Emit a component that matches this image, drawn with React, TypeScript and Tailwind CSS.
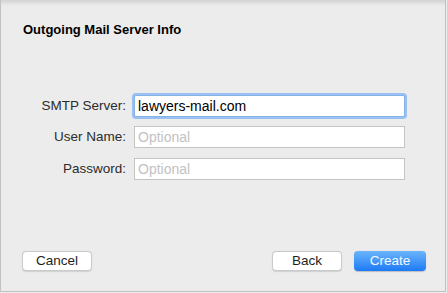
import React from 'react';

const font = { fontFamily: '"Liberation Sans", Arial, sans-serif' };

const Field: React.FC<{ label: string; value?: string; focused?: boolean; className?: string }> = ({
  label,
  value,
  focused,
  className,
}) => (
  <div className={`flex items-center ${className ?? ''}`}>
    <div className="w-[125px] text-right text-[13.5px] leading-[16px] text-[#2b2b2b]">{label}</div>
    <div
      className={`ml-[8px] flex h-[22px] w-[271px] items-center bg-white pl-[3px] text-[14px] leading-[16px] ${
        focused
          ? 'rounded-[2px] border border-[#86b2e8] shadow-[0_0_0_2px_#98c1f1]'
          : 'border border-[#c4c4c4]'
      }`}
    >
      {value ? <span className="text-black">{value}</span> : <span className="text-[#c2c2c2]">Optional</span>}
    </div>
  </div>
);

const Button: React.FC<{ label: string; primary?: boolean; className?: string }> = ({ label, primary, className }) => (
  <div
    className={`flex h-[20px] items-center justify-center rounded-[4px] text-[13.5px] leading-[16px] ${
      primary
        ? 'bg-gradient-to-b from-[#6ab4fb] to-[#1a7af5] text-[#f2f8ff] shadow-[0_0.5px_1px_rgba(0,0,0,0.2)]'
        : 'border border-[#cacaca] bg-white text-[#1e1e1e] shadow-[0_0.5px_1px_rgba(0,0,0,0.12)]'
    } ${className ?? ''}`}
  >
    {label}
  </div>
);

export default function App() {
  return (
    <div className="h-[293px] w-[447px] bg-[#ececec]" style={font}>
      <div className="flex h-[292px] w-[446px] flex-col border-x border-b border-[#c2c2c2] shadow-[inset_0_6px_5px_-4px_rgba(0,0,0,0.14)]">
        <div className="pl-[22px] pt-[22px] text-[13px] font-bold leading-[16px] text-black">
          Outgoing Mail Server Info
        </div>

        <Field label="SMTP Server:" value="lawyers-mail.com" focused className="mt-[57px]" />
        <Field label="User Name:" className="mt-[9px]" />
        <Field label="Password:" className="mt-[10px]" />

        <div className="mt-auto flex items-center pb-[20px] pl-[21px] pr-[19px]">
          <Button label="Cancel" className="w-[70px]" />
          <div className="flex-1" />
          <Button label="Back" className="w-[70px]" />
          <Button label="Create" primary className="ml-[12px] w-[72px]" />
        </div>
      </div>
    </div>
  );
}
